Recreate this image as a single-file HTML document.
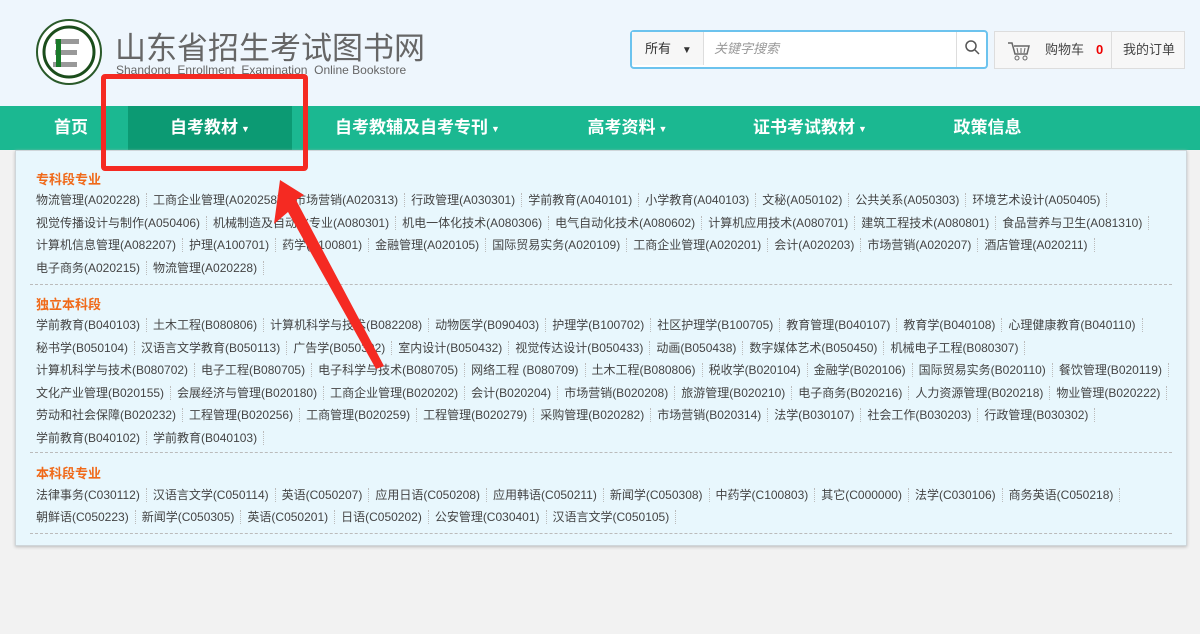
<!DOCTYPE html>
<html><head><meta charset="utf-8"><style>
*{margin:0;padding:0;box-sizing:border-box}
body{width:1200px;height:634px;background:#f2f2f2;font-family:"Liberation Sans","Noto Sans CJK SC",sans-serif;position:relative;overflow:hidden}
.hdr{position:absolute;left:0;top:0;width:1200px;height:106px;background:#eef6fd}
.nav{position:absolute;left:0;top:106px;width:1200px;height:44px;background:#1bb891}
.nav div{position:absolute;top:0;height:44px;line-height:44px;color:#fff;font-weight:bold;font-size:17px;text-align:center}
.car{font-size:9px;vertical-align:middle;margin-left:3px}
.panel{position:absolute;left:15px;top:150px;width:1172px;height:396px;background:#e8f7fd;border:1px solid #cfd6da;box-shadow:0 1px 3px #bbb}
.sec{position:absolute;left:20px;font-size:13px;font-weight:bold;color:#f06a1a}
.row{position:absolute;left:20px;font-size:12px;color:#444;white-space:nowrap;height:22px;line-height:22px}
.row span{display:inline-block;padding:0 6px;border-right:1px dotted #bbb;line-height:14px}
.row span:first-child{padding-left:0}
.dash{position:absolute;left:14px;width:1142px;border-top:1px dashed #bbb}
</style></head><body>
<div class="hdr">
<svg style="position:absolute;left:35px;top:17px" width="68" height="70" viewBox="0 0 68 70"><circle cx="34" cy="35" r="32" fill="#fff" stroke="#2a5a2a" stroke-width="2"/><circle cx="34" cy="35" r="25" fill="#fff" stroke="#1b4d1b" stroke-width="3"/><rect x="20" y="22" width="24" height="5" fill="#999"/><rect x="20" y="33" width="22" height="5" fill="#999"/><rect x="18" y="45" width="24" height="5" fill="#999"/><rect x="21" y="22" width="5" height="28" fill="#1a7a2a"/></svg>
<div style="position:absolute;left:115px;top:23px;font-size:31px;color:#666">山东省招生考试图书网</div>
<div style="position:absolute;left:116px;top:63px;font-size:12px;color:#666">Shandong &nbsp;Enrollment &nbsp;Examination &nbsp;Online Bookstore</div>
<div style="position:absolute;left:630px;top:30px;width:358px;height:39px;border:2px solid #6cc3ee;border-radius:4px;background:#fff">
<div style="position:absolute;left:0;top:0;width:72px;height:33px;background:#f7f7f7;border-right:1px solid #ddd;font-size:13px;color:#333;line-height:33px;padding-left:13px">所有 &nbsp;&nbsp;<span style="font-size:10px">▼</span></div>
<div style="position:absolute;left:82px;top:0;line-height:33px;font-size:13px;color:#999;font-style:italic">关键字搜索</div>
<div style="position:absolute;right:0;top:0;width:30px;height:35px;border-left:1px solid #ddd"><svg width="30" height="33"><circle cx="14" cy="14" r="5" fill="none" stroke="#555" stroke-width="1.5"/><line x1="18" y1="18" x2="22" y2="22" stroke="#555" stroke-width="1.5"/></svg></div>
</div>
<div style="position:absolute;left:994px;top:31px;width:191px;height:38px;background:#f7f7f7;border:1px solid #ddd;font-size:13px;color:#444;line-height:36px">
<svg style="position:absolute;left:12px;top:9px" width="24" height="20"><path d="M1 2h4l3 11h12l2-8H7" fill="none" stroke="#666" stroke-width="1.5"/><line x1="10" y1="7" x2="11" y2="12" stroke="#666"/><line x1="14" y1="7" x2="14" y2="12" stroke="#666"/><line x1="18" y1="7" x2="17" y2="12" stroke="#666"/><circle cx="10" cy="17" r="2" fill="none" stroke="#666"/><circle cx="18" cy="17" r="2" fill="none" stroke="#666"/></svg>
<span style="position:absolute;left:50px">购物车</span><span style="position:absolute;left:101px;color:#e00;font-weight:bold">0</span>
<div style="position:absolute;left:116px;top:0;height:36px;border-left:1px solid #ddd"></div>
<span style="position:absolute;left:128px">我的订单</span></div>
</div>
<div class="nav">
<div style="left:40px;width:62px">首页</div>
<div style="left:128px;width:164px;background:#0c9a73">自考教材<span class="car">▼</span></div>
<div style="left:320px;width:195px">自考教辅及自考专刊<span class="car">▼</span></div>
<div style="left:570px;width:115px">高考资料<span class="car">▼</span></div>
<div style="left:735px;width:150px">证书考试教材<span class="car">▼</span></div>
<div style="left:940px;width:95px">政策信息</div>
</div>
<div class="panel">
<div class="sec" style="top:18px">专科段专业</div>
<div class="row" style="top:38px"><span>物流管理(A020228)</span><span>工商企业管理(A020258)</span><span>市场营销(A020313)</span><span>行政管理(A030301)</span><span>学前教育(A040101)</span><span>小学教育(A040103)</span><span>文秘(A050102)</span><span>公共关系(A050303)</span><span>环境艺术设计(A050405)</span></div>
<div class="row" style="top:61px"><span>视觉传播设计与制作(A050406)</span><span>机械制造及自动化专业(A080301)</span><span>机电一体化技术(A080306)</span><span>电气自动化技术(A080602)</span><span>计算机应用技术(A080701)</span><span>建筑工程技术(A080801)</span><span>食品营养与卫生(A081310)</span></div>
<div class="row" style="top:83px"><span>计算机信息管理(A082207)</span><span>护理(A100701)</span><span>药学(A100801)</span><span>金融管理(A020105)</span><span>国际贸易实务(A020109)</span><span>工商企业管理(A020201)</span><span>会计(A020203)</span><span>市场营销(A020207)</span><span>酒店管理(A020211)</span></div>
<div class="row" style="top:106px"><span>电子商务(A020215)</span><span>物流管理(A020228)</span></div>
<div class="dash" style="top:133px"></div>
<div class="sec" style="top:143px">独立本科段</div>
<div class="row" style="top:163px"><span>学前教育(B040103)</span><span>土木工程(B080806)</span><span>计算机科学与技术(B082208)</span><span>动物医学(B090403)</span><span>护理学(B100702)</span><span>社区护理学(B100705)</span><span>教育管理(B040107)</span><span>教育学(B040108)</span><span>心理健康教育(B040110)</span></div>
<div class="row" style="top:186px"><span>秘书学(B050104)</span><span>汉语言文学教育(B050113)</span><span>广告学(B050302)</span><span>室内设计(B050432)</span><span>视觉传达设计(B050433)</span><span>动画(B050438)</span><span>数字媒体艺术(B050450)</span><span>机械电子工程(B080307)</span></div>
<div class="row" style="top:208px"><span>计算机科学与技术(B080702)</span><span>电子工程(B080705)</span><span>电子科学与技术(B080705)</span><span>网络工程 (B080709)</span><span>土木工程(B080806)</span><span>税收学(B020104)</span><span>金融学(B020106)</span><span>国际贸易实务(B020110)</span><span>餐饮管理(B020119)</span></div>
<div class="row" style="top:231px"><span>文化产业管理(B020155)</span><span>会展经济与管理(B020180)</span><span>工商企业管理(B020202)</span><span>会计(B020204)</span><span>市场营销(B020208)</span><span>旅游管理(B020210)</span><span>电子商务(B020216)</span><span>人力资源管理(B020218)</span><span>物业管理(B020222)</span></div>
<div class="row" style="top:253px"><span>劳动和社会保障(B020232)</span><span>工程管理(B020256)</span><span>工商管理(B020259)</span><span>工程管理(B020279)</span><span>采购管理(B020282)</span><span>市场营销(B020314)</span><span>法学(B030107)</span><span>社会工作(B030203)</span><span>行政管理(B030302)</span></div>
<div class="row" style="top:276px"><span>学前教育(B040102)</span><span>学前教育(B040103)</span></div>
<div class="dash" style="top:301px"></div>
<div class="sec" style="top:312px">本科段专业</div>
<div class="row" style="top:333px"><span>法律事务(C030112)</span><span>汉语言文学(C050114)</span><span>英语(C050207)</span><span>应用日语(C050208)</span><span>应用韩语(C050211)</span><span>新闻学(C050308)</span><span>中药学(C100803)</span><span>其它(C000000)</span><span>法学(C030106)</span><span>商务英语(C050218)</span></div>
<div class="row" style="top:355px"><span>朝鲜语(C050223)</span><span>新闻学(C050305)</span><span>英语(C050201)</span><span>日语(C050202)</span><span>公安管理(C030401)</span><span>汉语言文学(C050105)</span></div>
<div class="dash" style="top:382px"></div>
</div>
<div style="position:absolute;left:101px;top:74px;width:207px;height:97px;border:5px solid #f52a22;border-radius:4px"></div>
<svg style="position:absolute;left:0;top:0" width="1200" height="634"><polygon points="280,180 304,195 296,200 384,366 376,369 288,212 274,224" fill="#f52a22"/></svg>
</body></html>
